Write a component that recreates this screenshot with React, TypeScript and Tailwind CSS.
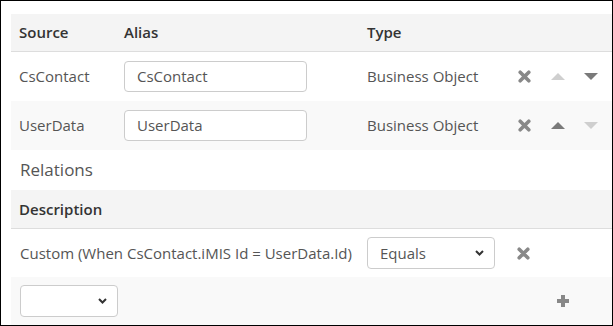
import React from "react";

const FONT = { fontFamily: '"Open Sans", "Noto Sans", sans-serif' };

function RemoveIcon() {
  return (
    <svg width="13" height="13" viewBox="0 0 13 13" aria-hidden="true">
      <path d="M2.2 2.2 L10.8 10.8 M10.8 2.2 L2.2 10.8" stroke="#888" strokeWidth="3.6" strokeLinecap="round" />
    </svg>
  );
}

function PlusIcon() {
  return (
    <svg width="14" height="14" viewBox="0 0 14 14" aria-hidden="true">
      <path d="M7 1 V13 M1 7 H13" stroke="#888" strokeWidth="4" />
    </svg>
  );
}

function Arrow({ dir, active }: { dir: "up" | "down"; active: boolean }) {
  const d = dir === "up" ? "M0 7 L7 0 L14 7 Z" : "M0 0 L14 0 L7 7 Z";
  return (
    <svg width="14" height="7" viewBox="0 0 14 7" aria-hidden="true">
      <path d={d} fill={active ? "#7a7a7a" : "#cfcfcf"} />
    </svg>
  );
}

function Chevron() {
  return (
    <svg width="9" height="6" viewBox="0 0 9 6" aria-hidden="true">
      <path d="M1 1 L4.5 4.5 L8 1" stroke="#333" strokeWidth="2" fill="none" />
    </svg>
  );
}

function Select({ value, width }: { value: string; width: string }) {
  return (
    <div
      className={`flex items-center justify-between h-[32px] rounded-[4px] border border-[#cccccc] bg-white pl-[12px] pr-[10px] text-[15px] text-[#555] ${width}`}
    >
      <span>{value}</span>
      <Chevron />
    </div>
  );
}

interface SourceRow {
  source: string;
  alias: string;
  type: string;
  canUp: boolean;
  canDown: boolean;
}

const SOURCES: SourceRow[] = [
  { source: "CsContact", alias: "CsContact", type: "Business Object", canUp: false, canDown: true },
  { source: "UserData", alias: "UserData", type: "Business Object", canUp: true, canDown: false },
];

export default function App() {
  return (
    <div
      className="w-[613px] h-[326px] border border-black bg-white pl-[10px] pt-[13px] overflow-hidden"
      style={FONT}
    >
      {/* Sources table */}
      <div className="flex items-center h-[38px] bg-[#f4f4f4] border-b border-[#dddddd] text-[15px] font-semibold text-[#333]">
        <div className="w-[105px] pl-[8px]">Source</div>
        <div className="w-[243px] pl-[8px]">Alias</div>
        <div className="pl-[8px]">Type</div>
      </div>
      {SOURCES.map((row, i) => (
        <div
          key={row.source}
          className={`flex items-center h-[49px] text-[15px] text-[#555] ${i % 2 === 1 ? "bg-[#f9f9f9]" : "bg-white"}`}
        >
          <div className="w-[105px] pl-[8px]">{row.source}</div>
          <div className="w-[243px] pl-[8px]">
            <div className="w-[183px] h-[31px] rounded-[4px] border border-[#cccccc] bg-white pl-[12px] flex items-center">
              {row.alias}
            </div>
          </div>
          <div className="w-[158px] pl-[8px]">{row.type}</div>
          <div className="flex items-center">
            <span className="w-[34px] flex justify-start pl-[1px]">
              <RemoveIcon />
            </span>
            <span className="w-[33px] flex justify-start">
              <Arrow dir="up" active={row.canUp} />
            </span>
            <span className="flex">
              <Arrow dir="down" active={row.canDown} />
            </span>
          </div>
        </div>
      ))}

      {/* Relations */}
      <div className="h-[40px] flex items-center pl-[9px] text-[17px] text-[#555]">Relations</div>
      <div className="flex items-center h-[39px] bg-[#f4f4f4] border-b border-[#dddddd] pl-[8px] text-[15px] font-semibold text-[#333]">
        Description
      </div>
      <div className="flex items-center h-[48px] text-[15px] text-[#555]">
        <div className="w-[356px] pl-[9px]">Custom (When CsContact.iMIS Id = UserData.Id)</div>
        <Select value="Equals" width="w-[128px]" />
        <span className="ml-[22px] flex">
          <RemoveIcon />
        </span>
      </div>
      <div className="flex items-center justify-between h-[48px] bg-[#f9f9f9] pl-[9px] pr-[42px]">
        <Select value="" width="w-[98px]" />
        <PlusIcon />
      </div>
    </div>
  );
}
